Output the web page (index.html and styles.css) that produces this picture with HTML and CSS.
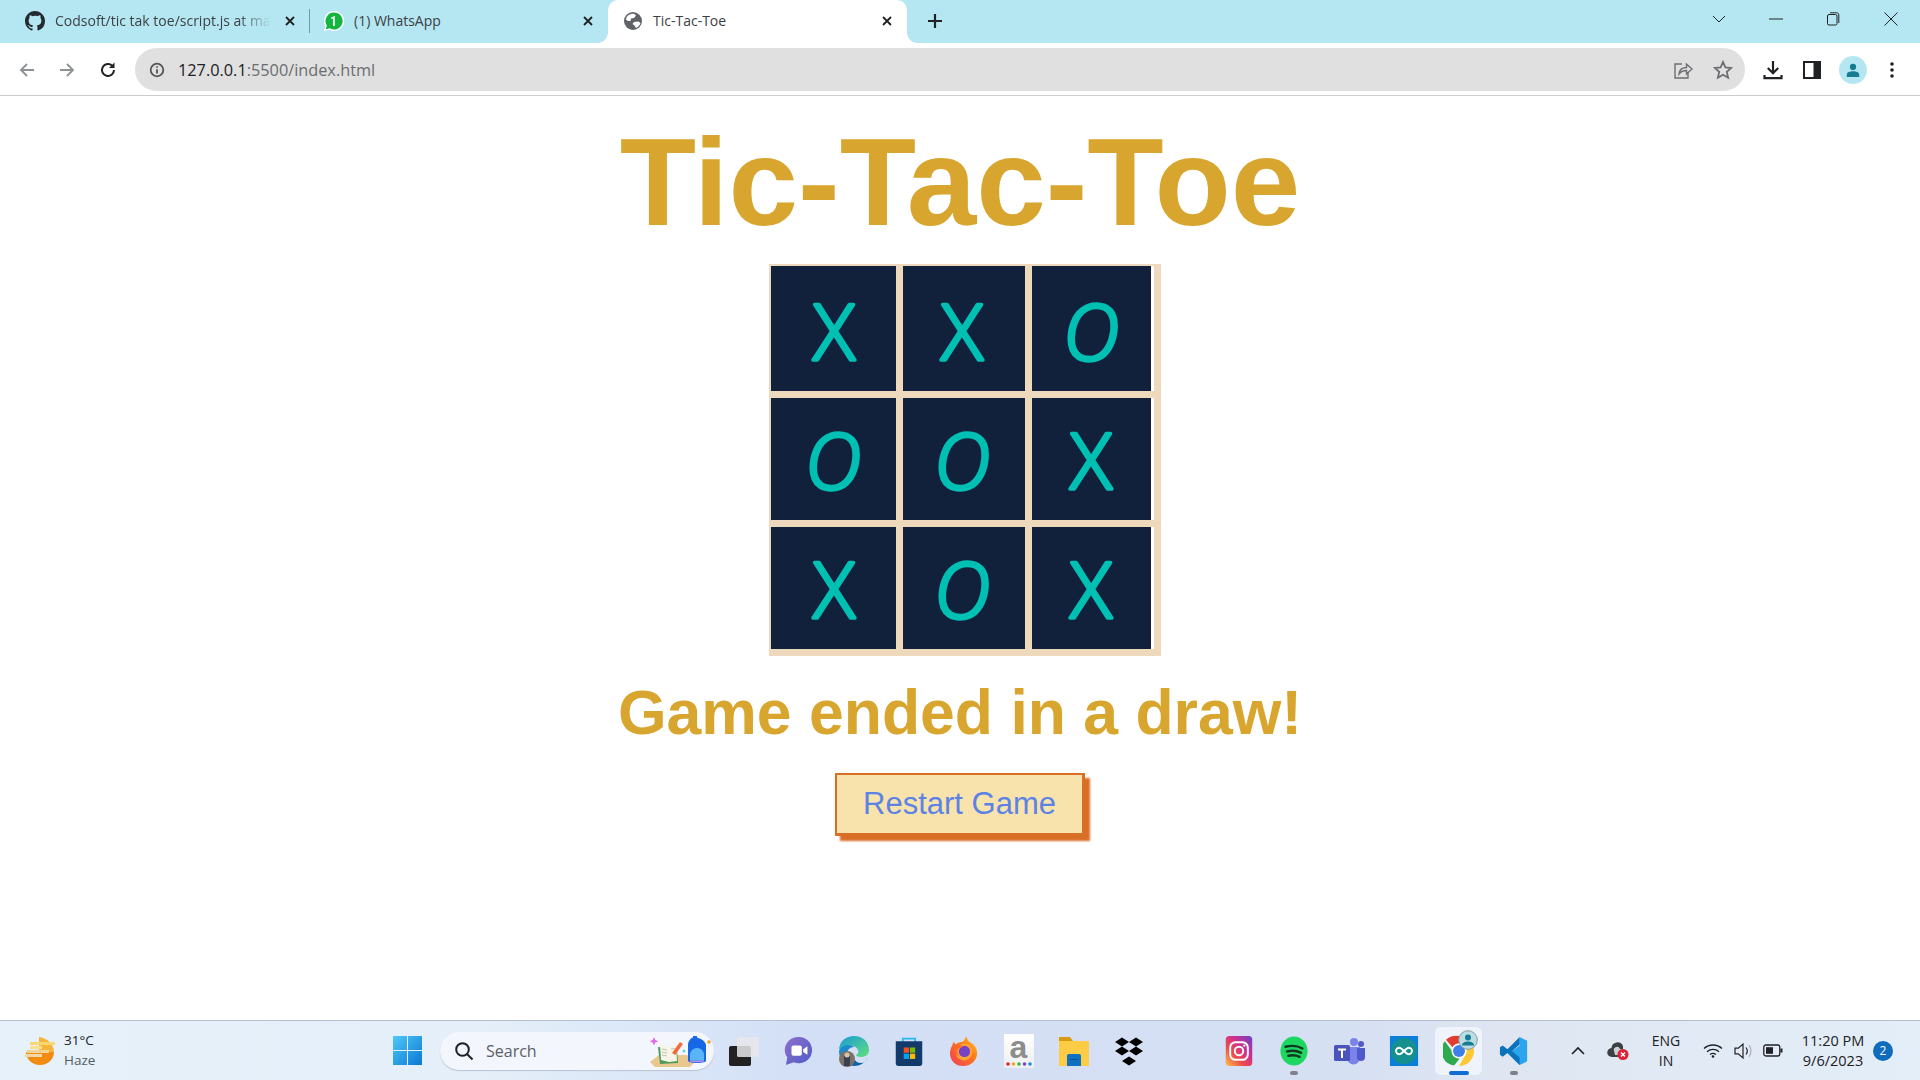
FILE: index.html
```html
<!DOCTYPE html>
<html lang="en">
<head>
<meta charset="utf-8">
<title>Tic-Tac-Toe</title>
<link rel="stylesheet" href="styles.css">
</head>
<body>
<header class="tabstrip">
  <div class="tab tab-first">
    <svg class="fav" viewBox="0 0 16 16"><path fill="#24292f" d="M8 0C3.58 0 0 3.58 0 8c0 3.54 2.29 6.53 5.47 7.59.4.07.55-.17.55-.38v-1.34c-2.22.48-2.69-1.07-2.69-1.07-.36-.92-.89-1.17-.89-1.17-.73-.5.05-.49.05-.49.8.06 1.23.82 1.23.82.71 1.22 1.87.87 2.33.66.07-.52.28-.87.51-1.07-1.78-.2-3.64-.89-3.64-3.95 0-.87.31-1.59.82-2.15-.08-.2-.36-1.02.08-2.12 0 0 .67-.21 2.2.82A7.6 7.6 0 0 1 8 3.87c.68 0 1.36.09 2 .27 1.53-1.04 2.2-.82 2.2-.82.44 1.1.16 1.92.08 2.12.51.56.82 1.27.82 2.15 0 3.07-1.87 3.75-3.65 3.95.29.25.54.73.54 1.48v2.19c0 .21.15.46.55.38A8 8 0 0 0 16 8c0-4.42-3.58-8-8-8z"/></svg>
    <span class="tab-title tab-title-fade">Codsoft/tic tak toe/script.js at ma</span>
    <svg class="tab-x tab-x-push tab-x-first" viewBox="0 0 12 12"><path d="M2 2l8 8M10 2l-8 8"/></svg>
  </div>
  <div class="tab-sep"></div>
  <div class="tab tab-second">
    <svg class="fav" viewBox="0 0 20 20"><path fill="#fff" d="M10 0a10 10 0 0 0-8.600 15L0 20l5.200-1.300A10 10 0 1 0 10 0z"/><path fill="#12b53e" d="M10 1.500a8.500 8.500 0 0 0-7.200 13l-1 3.700 3.800-1A8.500 8.500 0 1 0 10 1.500z"/><path fill="#fff" d="M10.800 5v10H9V7.400L7.200 8V6.400L10.500 5z"/></svg>
    <span class="tab-title">(1) WhatsApp</span>
    <svg class="tab-x tab-x-push" viewBox="0 0 12 12"><path d="M2 2l8 8M10 2l-8 8"/></svg>
  </div>
  <div class="tab tab-active">
    <svg class="fav" viewBox="0 0 18 18"><circle cx="9" cy="9" r="9" fill="#5f6368"/><path fill="#fff" d="M3 4.500c2-2 4.500-3 7.500-2.500l1.500 1.500-2 2.500-3 .5-.5 2.500L4 9 1.800 7.500zM10 10l4.500-.5 2 1.500c-.8 2.500-2.500 4-4.500 5l-1.500-2.500-2-1.500z"/></svg>
    <span class="tab-title tab-title-active">Tic-Tac-Toe</span>
    <svg class="tab-x tab-x-push" viewBox="0 0 12 12"><path d="M2 2l8 8M10 2l-8 8"/></svg>
  </div>
  <svg class="newtab" viewBox="0 0 16 16"><path d="M8 1v14M1 8h14"/></svg>
  <div class="winctrls">
    <svg class="wc wc-chev" viewBox="0 0 14 14"><path d="M1 4l6 6 6-6"/></svg>
    <svg class="wc wc-min" viewBox="0 0 14 14"><path d="M0 7h14"/></svg>
    <svg class="wc wc-max" viewBox="0 0 14 14"><rect x="1.500" y="2.500" width="9.500" height="10.500" rx="1.500"/><path d="M4 .8h6.500A2 2 0 0 1 12.800 3v8"/></svg>
    <svg class="wc wc-close" viewBox="0 0 14 14"><path d="M.5.5l13 13M13.500.5l-13 13"/></svg>
  </div>
</header>

<nav class="toolbar">
  <svg class="navbtn nav-back" viewBox="0 0 18 18"><path d="M16 9H3M9 3L3 9l6 6"/></svg>
  <svg class="navbtn nav-fwd" viewBox="0 0 18 18"><path d="M2 9h13M9 3l6 6-6 6"/></svg>
  <svg class="navbtn nav-reload" viewBox="0 0 18 18"><path d="M15 9a6 6 0 1 1-1.800-4.300"/><path class="fill" d="M15.500 1.500v5.500H10z"/></svg>
  <div class="omnibox">
    <svg class="info" viewBox="0 0 16 16"><circle cx="8" cy="8" r="6.300"/><path d="M8 7.200v4.300M8 4.300v1.500"/></svg>
    <span class="url"><span class="url-host">127.0.0.1</span>:5500/index.html</span>
    <svg class="omni-icon omni-share" viewBox="0 0 20 20"><path d="M9 4H2v14h13v-5"/><path d="M6 14c.5-4 3.500-6.500 7.500-6.500V4L19 9l-5.500 5v-3.500c-3 0-5.500 1-7.500 3.500z"/></svg>
    <svg class="omni-icon omni-star" viewBox="0 0 20 20"><path d="M10 2l2.400 5.400 5.800.6-4.400 3.900 1.300 5.800L10 14.700l-5.100 3 1.300-5.800L1.800 8l5.800-.6z"/></svg>
  </div>
  <svg class="tool tool-dl" viewBox="0 0 20 20"><path d="M10 1v12M4.800 8L10 13.200 15.200 8"/><path d="M1.500 15v3.200h17V15"/></svg>
  <svg class="tool tool-panel" viewBox="0 0 18 18"><rect x="1" y="1" width="16" height="16" fill="#fff"/><rect x="10.500" y="1" width="6.500" height="16" fill="#202124"/></svg>
  <div class="profile"><svg viewBox="0 0 18 18"><circle cx="9" cy="5.500" r="3.500"/><path d="M2 17v-2.500C2 11.500 5.500 10.500 9 10.500s7 1 7 4V17z"/></svg></div>
  <svg class="tool tool-dots" viewBox="0 0 4 18"><circle cx="2" cy="3" r="1.800"/><circle cx="2" cy="9" r="1.800"/><circle cx="2" cy="15" r="1.800"/></svg>
</nav>

<main class="page">
  <h1 class="title">Tic-Tac-Toe</h1>
  <div class="board">
    <div class="cell"><svg class="mark-svg" viewBox="0 0 100 120"><text class="mark mark-x" x="50" y="89">X</text></svg></div>
    <div class="cell"><svg class="mark-svg" viewBox="0 0 100 120"><text class="mark mark-x" x="48" y="89">X</text></svg></div>
    <div class="cell cell-end"><svg class="mark-svg" viewBox="0 0 100 120"><text class="mark mark-o" x="49" y="89">O</text></svg></div>
    <div class="cell"><svg class="mark-svg" viewBox="0 0 100 120"><text class="mark mark-o" x="49" y="89">O</text></svg></div>
    <div class="cell"><svg class="mark-svg" viewBox="0 0 100 120"><text class="mark mark-o" x="48" y="89">O</text></svg></div>
    <div class="cell cell-end"><svg class="mark-svg" viewBox="0 0 100 120"><text class="mark mark-x" x="49" y="89">X</text></svg></div>
    <div class="cell"><svg class="mark-svg" viewBox="0 0 100 120"><text class="mark mark-x" x="50" y="89">X</text></svg></div>
    <div class="cell"><svg class="mark-svg" viewBox="0 0 100 120"><text class="mark mark-o" x="48" y="89">O</text></svg></div>
    <div class="cell cell-end"><svg class="mark-svg" viewBox="0 0 100 120"><text class="mark mark-x" x="49" y="89">X</text></svg></div>
  </div>
  <h2 class="status">Game ended in a draw!</h2>
  <button class="restart">Restart Game</button>
</main>

<footer class="taskbar">
  <div class="weather">
    <svg class="weather-icon" viewBox="0 0 30 28"><path fill="#f08c12" d="M1 15h28c0 7-6 13-14 13S1 22 1 15z"/><path fill="#f5b53a" d="M14 0c8 1 15 7 15 15H14z"/><rect x="5" y="5" width="25" height="3" fill="#f8d873"/><rect x="5" y="9" width="12" height="3" fill="#f8e08c"/><rect x="2" y="13" width="22" height="3" fill="#f2d596"/><rect x="0" y="17" width="17" height="3" fill="#efd9ac"/></svg>
    <div class="weather-text"><span class="temp">31°C</span><span class="haze">Haze</span></div>
  </div>

  <div class="slot">
    <svg class="tb-icon tb-24" viewBox="0 0 28 28"><defs><linearGradient id="win" x1="0" y1="0" x2="1" y2="1"><stop offset="0" stop-color="#4fc8f8"/><stop offset="1" stop-color="#0a78d4"/></linearGradient></defs><path fill="url(#win)" d="M0 0h13.500v13.500H0zM14.500 0H28v13.500H14.500zM0 14.500h13.500V28H0zM14.500 14.500H28V28H14.500z"/></svg>
  </div>
  <div class="search">
    <svg class="search-glass" viewBox="0 0 20 20"><circle cx="8.500" cy="8.500" r="6.300"/><path d="M13 13l5.500 5.500"/></svg>
    <span class="search-text">Search</span>
    <svg class="search-art" viewBox="0 0 62 34"><path fill="#e9c890" d="M1 28l9-7h28l8 7-5 5H6z"/><path fill="#4e9a5c" d="M9 13l19 2 1 14-18 1z"/><path fill="#f7f5e6" d="M11 11l8 2 8-1 1 15-8 1-8-2z"/><path stroke="#b9b7a8" stroke-width=".8" d="M13 15l5 1M13 18l5 1M13 21l5 1M22 15l4-.5"/><path fill="#f26a3c" d="M23 19l8-11 3 2-8 11z"/><path fill="#e26ae8" d="M5 3l1.300 3 3 1.300-3 1.300L5 11.500 3.700 8.600l-3-1.300 3-1.300z"/><path fill="#1668e6" d="M39 11c0-4 3-7 5-7.500V2h4v1.500c3 .8 9 3.500 9 8v15c0 1.500-3 2.500-9 2.500s-9-1-9-2.500z"/><path fill="#5ab4fa" d="M41 21c0-4 3-7 7-7s7 3 7 7v5c-2 1-11 1-14 0z"/><path fill="#b58cf0" d="M41 26c3 1 11 1 14 0v1.500c-3 1-11 1-14 0z"/><circle cx="60" cy="8" r="1.800" fill="#f5a623"/><circle cx="35" cy="17" r="1.500" fill="#5ed4e8"/></svg>
  </div>
  <div class="slot slot-task">
    <svg class="tb-icon tb-30" viewBox="0 0 30 30"><rect x="0" y="10" width="22" height="20" rx="2" fill="#222"/><rect x="8" y="1" width="22" height="20" rx="1.500" fill="#e8e8ea" fill-opacity=".85"/></svg>
  </div>
  <div class="slot">
    <svg class="tb-icon tb-30" viewBox="0 0 30 32"><defs><linearGradient id="meet" x1="0" y1="0" x2="1" y2="1"><stop offset="0" stop-color="#8f6ecb"/><stop offset="1" stop-color="#4f5dc9"/></linearGradient></defs><path fill="url(#meet)" d="M15 1a14 14 0 1 1-5.500 26.900L1 31l1.500-8A14 14 0 0 1 15 1z"/><rect x="7" y="10" width="11" height="11" rx="2" fill="#fff"/><path fill="#fff" d="M19.500 14l4.500-3v9l-4.500-3z"/></svg>
  </div>
  <div class="slot">
    <svg class="tb-icon tb-32" viewBox="0 0 32 32"><defs><linearGradient id="edge" x1="0" y1="0" x2="1" y2="1"><stop offset="0" stop-color="#1a9ad8"/><stop offset="1" stop-color="#5fe07e"/></linearGradient></defs><path fill="url(#edge)" d="M1 14C2 6 8 1 16 1c9 0 15 6 15 14 0 5-4 7-8 7-3 0-5-1-5-2 2-1 3-3 2-5-1-3-5-5-9-4-5 1-9 4-10 3z"/><path fill="#0f5fa8" d="M30 22c-3 6-8 9-14 9-3 0-5-1-7-2 3 0 6-1 8-4 1 2 3 3 6 3 3 0 5-2 7-6z"/><path fill="#1b8ad0" d="M1 16c1-3 5-6 9-6 3 0 5 1 6 2-4 0-7 3-7 7 0 4 2 8 5 11C6 30 1 24 1 16z"/><circle cx="9" cy="24" r="8" fill="#7a7267"/><rect x="6" y="21" width="6" height="10" fill="#3b3f52"/><circle cx="9" cy="20" r="2.500" fill="#d9c3a8"/></svg>
  </div>
  <div class="slot">
    <svg class="tb-icon tb-30" viewBox="0 0 30 34"><path fill="none" stroke="#29b8f0" stroke-width="2" d="M8 9V3h14v6"/><path fill="#123a6b" d="M0 6h30v25a3 3 0 0 1-3 3H3a3 3 0 0 1-3-3z"/><rect x="9" y="13" width="6" height="6" fill="#f25022"/><rect x="16" y="13" width="6" height="6" fill="#7fba00"/><rect x="9" y="20" width="6" height="6" fill="#00a4ef"/><rect x="16" y="20" width="6" height="6" fill="#ffb900"/></svg>
  </div>
  <div class="slot">
    <svg class="tb-icon tb-30" viewBox="0 0 30 32"><defs><linearGradient id="ff" x1="0" y1="1" x2="1" y2="0"><stop offset="0" stop-color="#ef3c5c"/><stop offset=".6" stop-color="#ff7a18"/><stop offset="1" stop-color="#ffd02c"/></linearGradient></defs><path fill="url(#ff)" d="M2 11l2-5 2 3c2-2 5-3 8-3l4-6c0 3 1 5 4 7 5 3 7 7 7 11 0 8-7 14-15 14S0 26 0 18c0-2 1-5 2-7z"/><circle cx="15" cy="17" r="9" fill="#ffa436"/><circle cx="15.500" cy="16.500" r="6" fill="#7542c5"/><path fill="#ff6a22" d="M7 10c3-1 6 0 7 2-3 0-6 1-6 4 0 2 1 5 3 6-4-1-6-4-6-7 0-2 1-4 2-5z"/></svg>
  </div>
  <div class="slot">
    <div class="amazon"><span class="amazon-a">a</span><svg class="amazon-dots" viewBox="0 0 26 4"><circle cx="2" cy="2" r="1.800" fill="#e8202a"/><circle cx="7.500" cy="2" r="1.800" fill="#f5a623"/><circle cx="13" cy="2" r="1.800" fill="#3bb54a"/><circle cx="18.500" cy="2" r="1.800" fill="#7a3fd0"/><circle cx="24" cy="2" r="1.800" fill="#1c8ae6"/></svg></div>
  </div>
  <div class="slot">
    <svg class="tb-icon tb-30" viewBox="0 0 30 30"><path fill="#d99a0e" d="M0 1h11l3 4h16v3H0z"/><path fill="#fdcc45" d="M0 5h30v25H0z"/><path fill="#0f72c0" d="M8 20a2 2 0 0 1 2-2h10a2 2 0 0 1 2 2v10H8z"/><path fill="#0a4f8f" d="M11 23h8v1h-8z"/></svg>
  </div>
  <div class="slot">
    <svg class="tb-icon tb-30" viewBox="0 0 30 29"><path d="M8 1l7 4.500L8 10 1 5.500zM22 1l7 4.500-7 4.500-7-4.500zM8 10l7 4.500L8 19l-7-4.500zM22 10l7 4.500-7 4.500-7-4.500zM15 20l7 4.500L15 29l-7-4.500z"/></svg>
  </div>
  <div class="slot"></div>
  <div class="slot">
    <svg class="tb-icon tb-30" viewBox="0 0 30 34"><defs><linearGradient id="ig" x1="0" y1="1" x2="1" y2="0"><stop offset="0" stop-color="#fdc04a"/><stop offset=".35" stop-color="#ee4a4a"/><stop offset=".65" stop-color="#c92f96"/><stop offset="1" stop-color="#6a45c8"/></linearGradient></defs><rect width="30" height="34" rx="4" fill="url(#ig)"/><rect x="5" y="7" width="20" height="20" rx="6" fill="none" stroke="#fff" stroke-width="2.200"/><circle cx="15" cy="17" r="4.800" fill="none" stroke="#fff" stroke-width="2.200"/><circle cx="21" cy="11" r="1.300" fill="#fff"/></svg>
  </div>
  <div class="slot slot-open">
    <svg class="tb-icon tb-30" viewBox="0 0 30 32"><ellipse cx="15" cy="16" rx="14.500" ry="15.500" fill="#1ed760"/><path fill="none" stroke="#12361f" stroke-width="2.600" stroke-linecap="round" d="M6 11.500c6-1.500 13-1 18 1.800M7.500 16.500c5-1.200 11-.8 15 1.500M9 21c4-.9 8.500-.6 12 1.200"/></svg>
  </div>
  <div class="slot">
    <svg class="tb-icon tb-32" viewBox="0 0 32 32"><circle cx="21" cy="7" r="4" fill="#7b83eb"/><circle cx="28" cy="9" r="3" fill="#5059c9"/><path fill="#7b83eb" d="M14 12h13v11a6 6 0 0 1-13 0z"/><path fill="#5059c9" d="M24 13h8v9a4 4 0 0 1-8 0z"/><rect x="1" y="10" width="16" height="16" rx="1.500" fill="#4b53bc"/><path fill="#fff" d="M5 13.500h8v2H10V23H8v-7.500H5z"/></svg>
  </div>
  <div class="slot">
    <svg class="tb-icon tb-30" viewBox="0 0 30 32"><rect width="30" height="32" fill="#0a7fd8"/><circle cx="15" cy="16" r="14" fill="#16908f"/><path fill="none" stroke="#fff" stroke-width="2" d="M10 12.500a3.500 3.500 0 1 0 0 7c3 0 7-7 10-7a3.500 3.500 0 1 1 0 7c-3 0-7-7-10-7z"/></svg>
  </div>
  <div class="slot slot-active">
    <div class="chrome-wrap">
      <svg class="chrome" viewBox="0 0 32 32"><path fill="#e33b2e" d="M16 1a15 15 0 0 1 13 7.500H16a7.500 7.500 0 0 0-6.500 3.800L3 4.800A15 15 0 0 1 16 1z"/><path fill="#2da94f" d="M3 4.800l6.500 11.300a7.500 7.500 0 0 0 6.500 7.400L9.500 30A15 15 0 0 1 3 4.800z" transform="rotate(-6 16 16)"/><path fill="#fcc934" d="M29 8.500A15 15 0 0 1 16 31l6.500-11.300A7.500 7.500 0 0 0 16 8.500z"/><circle cx="16" cy="16" r="7.500" fill="#fff"/><circle cx="16" cy="16" r="6" fill="#3f7fe8"/></svg>
      <svg class="chrome-badge" viewBox="0 0 20 20"><circle cx="10" cy="10" r="9.300" fill="#b8dde2" stroke="#8a9aa0"/><circle cx="10" cy="7.500" r="3" fill="#157c92"/><path fill="#157c92" d="M4 15.500c0-3 3-4 6-4s6 1 6 4z"/></svg>
    </div>
  </div>
  <div class="slot slot-open">
    <svg class="tb-icon tb-30" viewBox="0 0 30 32"><path fill="#2aa5ee" d="M21 1l8 4v22l-8 4-12-12 12-9z"/><path fill="#0a73bc" d="M21 1L8 14 3 10 0 12v8l3 2 5-4 13 13V23l-8-7 8-7z"/></svg>
  </div>

  <div class="tray">
    <svg class="tray-item tray-chev" viewBox="0 0 14 9"><path d="M1 8l6-6 6 6"/></svg>
    <svg class="tray-item tray-cloud" viewBox="0 0 22 18"><path fill="#3c3f44" d="M5 15a4.500 4.500 0 0 1-.5-9A6 6 0 0 1 16 4v8l-4 3z"/><path fill="#c9cdd2" d="M7 9a3 3 0 0 1 6-2c2 0 3 1 3 2v4H8z"/><circle cx="16" cy="12.500" r="5.500" fill="#dc2234"/><path stroke="#fff" stroke-width="1.500" d="M14 10.500l4 4M18 10.500l-4 4"/></svg>
    <div class="lang"><span>ENG</span><span>IN</span></div>
    <svg class="tray-item tray-wifi" viewBox="0 0 20 15"><path d="M1 5.500c5-4.700 13-4.700 18 0M4 8.700c3.500-3 8.500-3 12 0M7 11.500c1.800-1.300 4.200-1.300 6 0"/><circle class="fill" cx="10" cy="13.500" r="1.300"/></svg>
    <svg class="tray-item tray-vol" viewBox="0 0 20 18"><path d="M1 6.200h3.300L9 2v14l-4.700-4.200H1z"/><path d="M12 5.500c1.500 2 1.500 5 0 7"/><path class="faint" d="M15 3c2.500 3.500 2.500 8.500 0 12"/></svg>
    <svg class="tray-item tray-bat" viewBox="0 0 20 13"><rect x=".8" y="1" width="16" height="11" rx="2"/><rect class="fill" x="3" y="3.200" width="7" height="6.600"/><rect class="fill" x="17.500" y="4.500" width="2" height="4"/></svg>
    <div class="clock"><span>11:20 PM</span><span>9/6/2023</span></div>
    <div class="badge">2</div>
  </div>
</footer>
</body>
</html>
```

FILE: styles.css
```css
* { box-sizing: border-box; }
html, body { margin: 0; height: 100%; }
body {
  display: flex;
  flex-direction: column;
  height: 100vh;
  overflow: hidden;
  background: #fff;
  font-family: "Liberation Sans", Arial, sans-serif;
}

/* Tab strip */
.tabstrip {
  display: flex;
  align-items: center;
  height: 43px;
  flex: none;
  background: #b5e7f3;
  font-family: "Open Sans", sans-serif;
  font-size: 14px;
  color: #3c4043;
}
.tab {
  display: flex;
  align-items: center;
  height: 43px;
  padding-bottom: 2px;
}
.tab-first { width: 309px; padding-left: 25px; }
.tab-sep { width: 1px; height: 24px; margin-bottom: 2px; background: #6f9aa5; flex: none; }
.tab-second { width: 298px; padding-left: 14px; }
.tab-active {
  position: relative;
  width: 299px;
  padding-left: 16px;
  background: #fff;
  border-radius: 10px 10px 0 0;
}
.tab-active::before,
.tab-active::after {
  content: "";
  position: absolute;
  bottom: 0;
  width: 10px;
  height: 10px;
}
.tab-active::before {
  left: -10px;
  background: radial-gradient(circle at 0 0, #b5e7f3 9.500px, #fff 10px);
}
.tab-active::after {
  right: -10px;
  background: radial-gradient(circle at 100% 0, #b5e7f3 9.500px, #fff 10px);
}
.fav { width: 20px; height: 20px; flex: none; }
.tab-active .fav { width: 18px; height: 18px; }
.tab-title { margin-left: 10px; white-space: nowrap; }
.tab-title-active { margin-left: 11px; }
.tab-title-fade {
  -webkit-mask-image: linear-gradient(to right, #000 85%, transparent 100%);
  mask-image: linear-gradient(to right, #000 85%, transparent 100%);
}
.tab-x {
  width: 12px;
  height: 12px;
  flex: none;
  fill: none;
  stroke: #202124;
  stroke-width: 1.800;
}
.tab-x-push { margin-left: auto; margin-right: 14px; }
.tab-x-first { margin-right: 13px; }
.newtab {
  width: 16px;
  height: 16px;
  margin: 0 0 2px 20px;
  fill: none;
  stroke: #202124;
  stroke-width: 2.200;
  flex: none;
}
.winctrls {
  display: flex;
  align-items: center;
  align-self: flex-start;
  margin-left: auto;
  margin-right: 22px;
  height: 37px;
}
.wc { fill: none; stroke: #202124; stroke-width: 1; flex: none; }
.wc-chev { width: 14px; height: 14px; margin-right: 43px; }
.wc-min { width: 14px; height: 14px; margin-right: 43px; }
.wc-max { width: 14px; height: 14px; margin-right: 44px; }
.wc-close { width: 14px; height: 14px; }

/* Toolbar */
.toolbar {
  display: flex;
  align-items: center;
  height: 53px;
  flex: none;
  padding: 5px 0 4px 18px;
  background: #fff;
  border-bottom: 1px solid #ccc;
}
.navbtn {
  width: 18px;
  height: 18px;
  flex: none;
  fill: none;
  stroke: #8e9193;
  stroke-width: 1.800;
}
.nav-fwd { margin-left: 22px; }
.nav-reload { margin-left: 23px; stroke: #202124; stroke-width: 2; }
.nav-reload .fill { fill: #202124; stroke: none; }
.omnibox {
  display: flex;
  align-items: center;
  width: 1610px;
  height: 43px;
  margin-left: 18px;
  padding-left: 14px;
  background: #e0e0e0;
  border-radius: 22px;
  flex: none;
  font-family: "Open Sans", sans-serif;
  font-size: 16.300px;
  color: #6a6d70;
}
.info {
  width: 16px;
  height: 16px;
  flex: none;
  fill: none;
  stroke: #555;
  stroke-width: 1.800;
}
.url { margin-left: 13px; white-space: nowrap; }
.url-host { color: #202124; }
.omni-icon {
  width: 20px;
  height: 20px;
  flex: none;
  fill: none;
  stroke: #6c6e71;
  stroke-width: 1.400;
}
.omni-share { margin-left: auto; }
.omni-star { margin-left: 20px; margin-right: 12px; stroke-width: 1.800; }
.tool { flex: none; }
.tool-dl {
  width: 20px;
  height: 20px;
  margin-left: 18px;
  fill: none;
  stroke: #202124;
  stroke-width: 2.200;
}
.tool-panel { width: 18px; height: 18px; margin-left: 20px; stroke: none; outline: 2px solid #202124; outline-offset: -2px; }
.profile {
  display: flex;
  align-items: center;
  justify-content: center;
  width: 28px;
  height: 28px;
  margin-left: 18px;
  border-radius: 50%;
  background: #b5e7f3;
  flex: none;
}
.profile svg { width: 16px; height: 16px; fill: #157c92; }
.tool-dots { width: 4px; height: 18px; margin-left: 23px; fill: #202124; }

/* Page */
.page {
  flex: 1;
  display: flex;
  flex-direction: column;
  align-items: center;
  padding-top: 23px;
  min-height: 0;
}
.title {
  margin: 0;
  font-size: 125px;
  line-height: 125px;
  font-weight: 700;
  color: #d8a62e;
}
.board {
  display: grid;
  grid-template-columns: 125px 122px 122px;
  grid-template-rows: 125px 122px 122px;
  gap: 7px;
  width: 385px;
  height: 385px;
  margin: 20px 0 0 3px;
  padding: 2px 0 0 2px;
  background: #eed9bd;
  box-shadow: 7px 0 0 #eed9bd, 0 7px 0 #eed9bd, 7px 7px 0 #eed9bd;
}
.cell {
  display: flex;
  align-items: flex-end;
  justify-content: center;
  background: #12213b;
}
.cell-end { border-right: 3px solid #fff; }
.mark-svg { width: 100px; height: 120px; flex: none; }
.mark {
  font-family: "Open Sans", sans-serif;
  font-size: 78px;
  font-weight: 300;
  text-anchor: middle;
  fill: #00bfb3;
  stroke: #00bfb3;
  stroke-width: 3.500;
  stroke-linejoin: round;
  stroke-linecap: round;
}
.mark-o { font-style: italic; }
.status {
  margin: 31px 0 0;
  font-size: 62.500px;
  line-height: 64px;
  font-weight: 700;
  color: #d8a62e;
}
.restart {
  width: 250px;
  height: 63px;
  margin-top: 29px;
  padding: 0;
  border: 2px solid #d96e26;
  border-width: 2px 3px 3px 2px;
  border-radius: 0;
  background: #f7e3ab;
  box-shadow: 5px 5px 2px #d96e26;
  font-family: "Liberation Sans", Arial, sans-serif;
  font-size: 31px;
  color: #5c82e6;
}

/* Taskbar */
.taskbar {
  display: flex;
  align-items: center;
  height: 60px;
  flex: none;
  border-top: 1px solid #b4bfd0;
  background: linear-gradient(90deg, #e6f1fa 0%, #e4eff9 25%, #d3dff6 42%, #d6e0f3 70%, #dfe6f2 78%, #e3eef8 100%);
  font-family: "Open Sans", sans-serif;
  color: #202124;
}
.weather {
  display: flex;
  align-items: center;
  width: 380px;
  padding-left: 25px;
  flex: none;
}
.weather-icon { width: 30px; height: 28px; flex: none; }
.weather-text {
  display: flex;
  flex-direction: column;
  margin: -2px 0 0 9px;
  font-size: 13.500px;
  line-height: 20px;
}
.haze { color: #555b63; }
.slot {
  position: relative;
  display: flex;
  align-items: center;
  justify-content: center;
  width: 55px;
  height: 48px;
  flex: none;
}
.slot-task { margin-left: 2px; }
.slot-open::after,
.slot-active::after {
  content: "";
  position: absolute;
  bottom: 0;
  left: 50%;
  width: 8px;
  height: 4px;
  margin-left: -4px;
  border-radius: 2px;
  background: #7c818a;
}
.slot-active::before {
  content: "";
  position: absolute;
  inset: 0 4px;
  border-radius: 5px;
  background: #eff3fb;
  box-shadow: 0 0 1px #c7cfdc;
}
.slot-active::after { width: 20px; margin-left: -10px; background: #0f6cd0; }
.tb-icon { display: block; flex: none; }
.tb-24 { width: 29px; height: 29px; }
.tb-30 { width: 30px; height: 30px; }
.tb-32 { width: 32px; height: 32px; }
.search {
  display: flex;
  align-items: center;
  width: 274px;
  height: 38px;
  margin-left: 5px;
  padding-left: 14px;
  background: #f3f6fd;
  border-radius: 19px;
  box-shadow: 0 1px 1px #b8c2d2;
  flex: none;
  font-size: 16px;
  color: #5c6066;
}
.search-glass {
  width: 20px;
  height: 20px;
  flex: none;
  fill: none;
  stroke: #202124;
  stroke-width: 2;
}
.search-text { margin-left: 12px; }
.search-art { width: 62px; height: 34px; margin-left: auto; margin-right: 3px; flex: none; }
.amazon {
  display: flex;
  flex-direction: column;
  align-items: center;
  width: 30px;
  height: 34px;
  background: linear-gradient(#fff, #efefef);
}
.amazon-a {
  font-family: "Liberation Sans", Arial, sans-serif;
  font-size: 32px;
  line-height: 27px;
  font-weight: 700;
  color: #8d8d8d;
}
.amazon-dots { width: 26px; height: 4px; margin-top: 1px; }
.chrome-wrap { position: relative; width: 32px; height: 32px; }
.chrome { display: block; width: 32px; height: 32px; }
.chrome-badge { position: absolute; top: -5px; left: 15px; width: 20px; height: 20px; }

/* Tray */
.tray {
  display: flex;
  align-items: center;
  margin-left: 17px;
  flex: none;
}
.tray-item { flex: none; fill: none; stroke: #202124; }
.tray-chev { width: 14px; height: 9px; margin: 0 13px; stroke-width: 1.600; }
.tray-cloud { width: 22px; height: 18px; margin: 0 9px; stroke: none; }
.lang {
  display: flex;
  flex-direction: column;
  align-items: center;
  width: 56px;
  font-size: 14px;
  line-height: 20px;
}
.tray-wifi { width: 20px; height: 15px; margin: 0 6px 0 9px; stroke-width: 1.300; }
.tray-wifi .fill, .tray-bat .fill { fill: #202124; stroke: none; }
.tray-vol { width: 20px; height: 18px; margin: 0 3px 0 5px; stroke-width: 1.200; }
.tray-vol .faint { stroke: #a8adb5; }
.tray-bat { width: 20px; height: 13px; margin: 0 6px 0 6px; stroke-width: 1.300; }
.clock {
  display: flex;
  flex-direction: column;
  align-items: center;
  width: 82px;
  margin-left: 3px;
  font-size: 14.500px;
  line-height: 20px;
}
.badge {
  display: flex;
  align-items: center;
  justify-content: center;
  width: 20px;
  height: 20px;
  margin-left: -1px;
  border-radius: 50%;
  background: #0f6cbd;
  color: #fff;
  font-size: 12px;
}
```
